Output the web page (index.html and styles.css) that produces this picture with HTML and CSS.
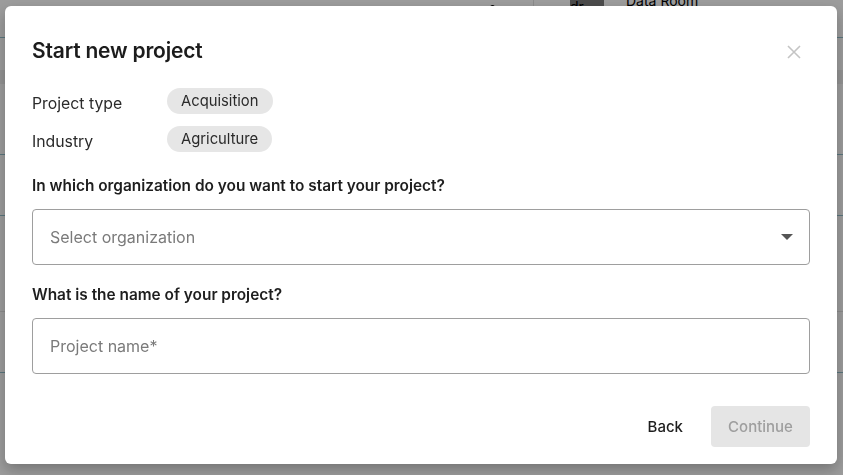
FILE: index.html
```html
<!DOCTYPE html>
<html lang="en">

<head>
  <meta charset="UTF-8">
  <meta name="viewport" content="width=device-width, initial-scale=1.0">
  <title>Start new project</title>
  <link rel="stylesheet" href="styles.css">
</head>

<body>
  <!-- page behind the dialog -->
  <div class="page">
    <div class="page-top">
      <span class="dot"></span>
      <span class="vline"></span>
      <span class="avatar">dr</span>
      <span class="room">Data Room</span>
    </div>
    <div class="page-row r1"></div>
    <div class="page-row r2"></div>
    <div class="page-row r3"></div>
    <div class="page-row r4"></div>
    <div class="page-row r5"></div>
  </div>

  <div class="backdrop">
    <div class="modal">
      <div class="modal-head">
        <h2 class="modal-title">Start new project</h2>
        <button class="close-btn" aria-label="Close">
          <svg width="14" height="14" viewBox="0 0 14 14">
            <path d="M1 1 L13 13 M13 1 L1 13" stroke="#c4c4c4" stroke-width="1.6" fill="none" />
          </svg>
        </button>
      </div>

      <div class="summary">
        <div class="summary-row">
          <span class="summary-label">Project type</span>
          <span class="chip">Acquisition</span>
        </div>
        <div class="summary-row">
          <span class="summary-label">Industry</span>
          <span class="chip">Agriculture</span>
        </div>
      </div>

      <label class="question" for="org">In which organization do you want to start your project?</label>
      <div class="field select-field" id="org">
        <span class="placeholder">Select organization</span>
        <svg class="caret" width="12" height="6" viewBox="0 0 12 6">
          <path d="M0 0 H12 L6 6 Z" fill="#555" />
        </svg>
      </div>

      <label class="question" for="name">What is the name of your project?</label>
      <div class="field" id="name">
        <span class="placeholder">Project name*</span>
      </div>

      <div class="modal-foot">
        <button class="btn btn-text">Back</button>
        <button class="btn btn-disabled" disabled>Continue</button>
      </div>
    </div>
  </div>
</body>

</html>
```

FILE: styles.css
```css
* {
  box-sizing: border-box;
}

body {
  margin: 0;
  font-family: Inter, "Noto Sans", Arial, sans-serif;
  background-color: #f4f4f4;
  height: 475px;
  overflow: hidden;
}

/* page under the overlay */
.page {
  position: relative;
  height: 475px;
}

.page-top {
  display: flex;
  align-items: flex-start;
  height: 38px;
  padding-left: 490px;
  border-bottom: 1px solid #8cb8c4;
  font-size: 14px;
  line-height: 14px;
  color: #000;
}

.dot {
  width: 5px;
  height: 5px;
  border-radius: 50%;
  background: #000;
  margin-top: 5px;
}

.vline {
  width: 1px;
  height: 38px;
  background: #d8d8d8;
  margin-left: 38px;
}

.avatar {
  width: 34px;
  height: 20px;
  margin-left: 36px;
  background: #777;
}

.room {
  margin-left: 22px;
  margin-top: -6px;
}

.page-row {
  height: 1px;
  background: #dadada;
}

.r1 { margin-top: 32px; height: 14px; background: #e6e6e6; }
.r2 { margin-top: 70px; background: #8cb8c4; }
.r3 { margin-top: 60px; background: #8cb8c4; height: 1px; }
.r4 { margin-top: 95px; }
.r5 { margin-top: 60px; background: #8cb8c4; }

/* overlay + dialog */
.backdrop {
  position: fixed;
  left: 0;
  top: 0;
  width: 100%;
  height: 100%;
  background-color: rgba(0, 0, 0, 0.36);
  padding: 6px 6px 11px 5px;
}

.modal {
  background-color: #fff;
  border-radius: 6px;
  height: 458px;
  padding: 31px 27px 17px 27px;
  box-shadow: 0 6px 14px rgba(0, 0, 0, 0.25);
  color: #212121;
}

.modal-head {
  display: flex;
  justify-content: space-between;
  align-items: center;
}

.modal-title {
  margin: 0;
  font-size: 21px;
  line-height: 28px;
  font-weight: 600;
  letter-spacing: -0.2px;
  color: #1c1c1c;
}

.close-btn {
  border: none;
  background: none;
  padding: 0;
  margin-right: 9px;
  margin-top: 2px;
  display: flex;
  cursor: pointer;
}

.summary {
  margin-top: 18px;
}

.summary-row {
  display: flex;
  align-items: center;
  height: 38px;
}

.summary-label {
  width: 135px;
  font-size: 15.8px;
  color: #2b2b2b;
  padding-top: 2px;
}

.chip {
  background-color: #e6e6e6;
  border-radius: 13px;
  height: 26px;
  line-height: 26px;
  padding: 0 14px;
  font-size: 14.8px;
  color: #2a2a2a;
  margin-top: -3px;
}

.question {
  display: block;
  margin-top: 16px;
  font-size: 15.4px;
  line-height: 22px;
  font-weight: 600;
  color: #1e1e1e;
}

.field {
  display: flex;
  align-items: center;
  justify-content: space-between;
  height: 56px;
  margin-top: 12px;
  padding: 0 17px;
  border: 1px solid #9e9e9e;
  border-radius: 4px;
}

.field + .question {
  margin-top: 19px;
}

.placeholder {
  font-size: 16px;
  color: #7a7a7a;
}

.caret {
  margin-right: -1px;
}

.modal-foot {
  display: flex;
  justify-content: flex-end;
  align-items: center;
  gap: 16px;
  margin-top: 32px;
}

.btn {
  height: 41px;
  border: none;
  border-radius: 4px;
  font-family: Inter, "Noto Sans", Arial, sans-serif;
  font-size: 15px;
  font-weight: 500;
  padding: 0 17px;
  cursor: pointer;
}

.btn-text {
  background: none;
  color: #1e1e1e;
  padding: 0 12px;
}

.btn-disabled {
  background-color: #e5e5e5;
  color: #9e9e9e;
  width: 99px;
  cursor: default;
}
```
